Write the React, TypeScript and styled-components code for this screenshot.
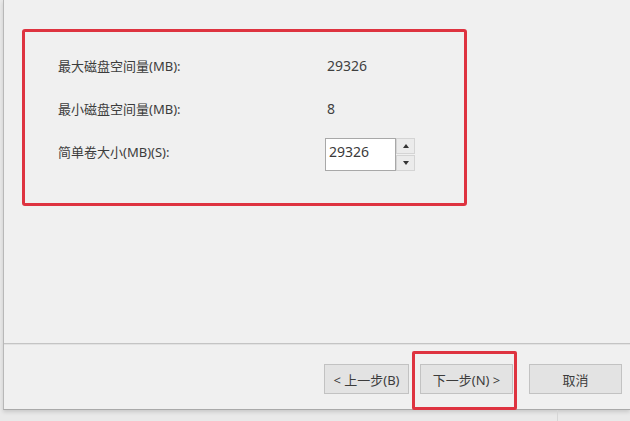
import React from "react";
import styled, { createGlobalStyle } from "styled-components";

const Global = createGlobalStyle`
  html, body {
    margin: 0;
    padding: 0;
    background: #e9e9e9;
    overflow: hidden;
  }
  body {
    font-family: "Noto Sans", "Noto Sans CJK SC", sans-serif;
    color: #3c3c3c;
  }
`;

const Desktop = styled.div`
  width: 630px;
  height: 421px;
  display: flex;
  flex-direction: column;
  overflow: hidden;
`;

const Dialog = styled.div`
  margin-left: 3px;
  height: 410px;
  flex: none;
  box-sizing: border-box;
  background: #f0f0f0;
  border-left: 1px solid #b8b8b8;
  border-bottom: 1px solid #a9a9a9;
  box-shadow: 0 2px 4px rgba(0, 0, 0, 0.14);
  display: flex;
  flex-direction: column;
`;

const Body = styled.div`
  height: 343px;
  flex: none;
  box-sizing: border-box;
  padding: 29px 0 0 18px;
`;

const HighlightBox = styled.div`
  width: 445px;
  height: 177px;
  box-sizing: border-box;
  border: 3px solid #de3340;
  border-radius: 3px;
  padding: 12px 0 0 33px;
  display: grid;
  grid-template-columns: 267px auto;
  grid-auto-rows: 43px;
  align-items: center;
`;

const Label = styled.div`
  font-size: 13px;
  color: #3c3c3c;
  white-space: nowrap;
`;

const Value = styled.div`
  font-size: 14px;
  color: #404040;
  padding-left: 2px;
`;

const Spin = styled.div`
  display: flex;
  width: 90px;
  height: 33px;
  margin-top: 6px;
`;

const SpinField = styled.div`
  width: 71px;
  box-sizing: border-box;
  background: #fff;
  border: 1px solid #a8a8a8;
  font-size: 14px;
  color: #3a3a3a;
  padding: 4px 0 0 3px;
  line-height: 18px;
`;

const SpinButtons = styled.div`
  width: 19px;
  display: flex;
  flex-direction: column;
  gap: 1px;
`;

const SpinBtn = styled.div`
  flex: 1;
  background: #ebebeb;
  border: 1px solid #d4d4d4;
  display: flex;
  align-items: center;
  justify-content: center;
`;

const Footer = styled.div`
  flex: 1;
  border-top: 1px solid #c4c4c4;
  box-shadow: inset 0 1px 0 #e2e2e2;
  display: flex;
  justify-content: flex-end;
  align-items: flex-start;
  padding: 20px 8px 0 0;
`;

const Button = styled.div<{ $w: number; $gap?: number }>`
  width: ${(p) => p.$w}px;
  height: 30px;
  margin-left: ${(p) => p.$gap ?? 0}px;
  box-sizing: border-box;
  background: #e3e3e3;
  border: 1px solid #c2c2c2;
  display: flex;
  align-items: center;
  justify-content: center;
  font-size: 13px;
  color: #3c3c3c;
  white-space: nowrap;
`;

const Marked = styled.div`
  position: relative;
  margin-left: 11px;
  &::after {
    content: "";
    position: absolute;
    inset: -13px -4px -16px -8px;
    border: 3px solid #de3340;
    border-radius: 2px;
    pointer-events: none;
  }
`;

const Ground = styled.div`
  flex: 1;
  display: flex;
`;

const GroundPane = styled.div`
  width: 557px;
  border-right: 1px solid #d6d6d6;
`;

const Arrow = ({ up }: { up?: boolean }) => (
  <svg width="6" height="4" viewBox="0 0 6 4">
    <path d={up ? "M0 4 L3 0 L6 4 Z" : "M0 0 L6 0 L3 4 Z"} fill="#333" />
  </svg>
);

export default function App() {
  return (
    <>
      <Global />
      <Desktop>
        <Dialog>
          <Body>
            <HighlightBox>
              <Label>最大磁盘空间量(MB):</Label>
              <Value>29326</Value>
              <Label>最小磁盘空间量(MB):</Label>
              <Value>8</Value>
              <Label>简单卷大小(MB)(S):</Label>
              <Spin>
                <SpinField>29326</SpinField>
                <SpinButtons>
                  <SpinBtn>
                    <Arrow up />
                  </SpinBtn>
                  <SpinBtn>
                    <Arrow />
                  </SpinBtn>
                </SpinButtons>
              </Spin>
            </HighlightBox>
          </Body>
          <Footer>
            <Button $w={85}>&lt; 上一步(B)</Button>
            <Marked>
              <Button $w={93}>下一步(N) &gt;</Button>
            </Marked>
            <Button $w={93} $gap={16}>
              取消
            </Button>
          </Footer>
        </Dialog>
        <Ground>
          <GroundPane />
        </Ground>
      </Desktop>
    </>
  );
}
